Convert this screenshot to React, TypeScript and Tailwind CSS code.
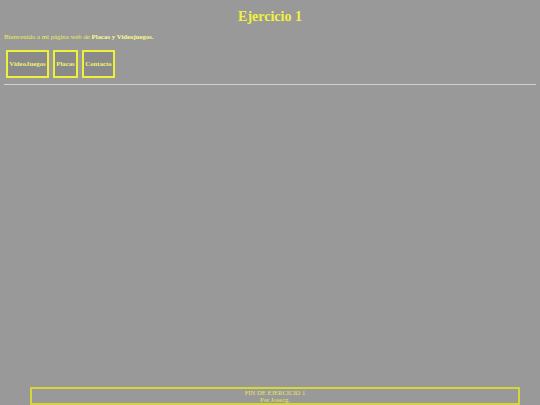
export default function App() {
  const links = [
    { label: "VideoJuegos", w: "w-[43px]" },
    { label: "Placas", w: "w-[25px]" },
    { label: "Contacto", w: "w-[33px]" },
  ];

  return (
    <div className="h-[405px] w-[540px] overflow-hidden bg-[#999999] flex flex-col font-['Liberation_Serif',serif]">
      {/* Cabecera */}
      <h1 className="mt-[9px] text-center text-[14px] leading-[16px] font-bold text-[#f2f23c]">
        Ejercicio 1
      </h1>

      <p className="mt-[8px] ml-[4px] text-[6.8px] leading-[8px] text-[#eded5a]">
        Bienvenido a mi página web de <b className="text-[#fafa8c]">Placas y Videojuegos.</b>
      </p>

      {/* Menu */}
      <nav className="mt-[9px] ml-[6px] flex gap-[4px]">
        {links.map((l) => (
          <a
            key={l.label}
            className={`${l.w} h-[28px] flex items-center justify-center border-2 border-[#f0f03a] bg-[#8a8a8a] text-[6.8px] font-bold text-[#f0f070]`}
          >
            {l.label}
          </a>
        ))}
      </nav>

      <hr className="mt-[6px] mx-[4px] border-0 border-t border-[#d2d2d2]" />

      {/* Pie */}
      <footer className="mt-auto ml-[30px] w-[490px] h-[18px] border-2 border-[#d6d63a] flex flex-col items-center justify-start text-[6.6px] leading-[7px] text-[#e6e660]">
        <span>FIN DE EJERCICIO 1</span>
        <span>Por Josecg.</span>
      </footer>
    </div>
  );
}
